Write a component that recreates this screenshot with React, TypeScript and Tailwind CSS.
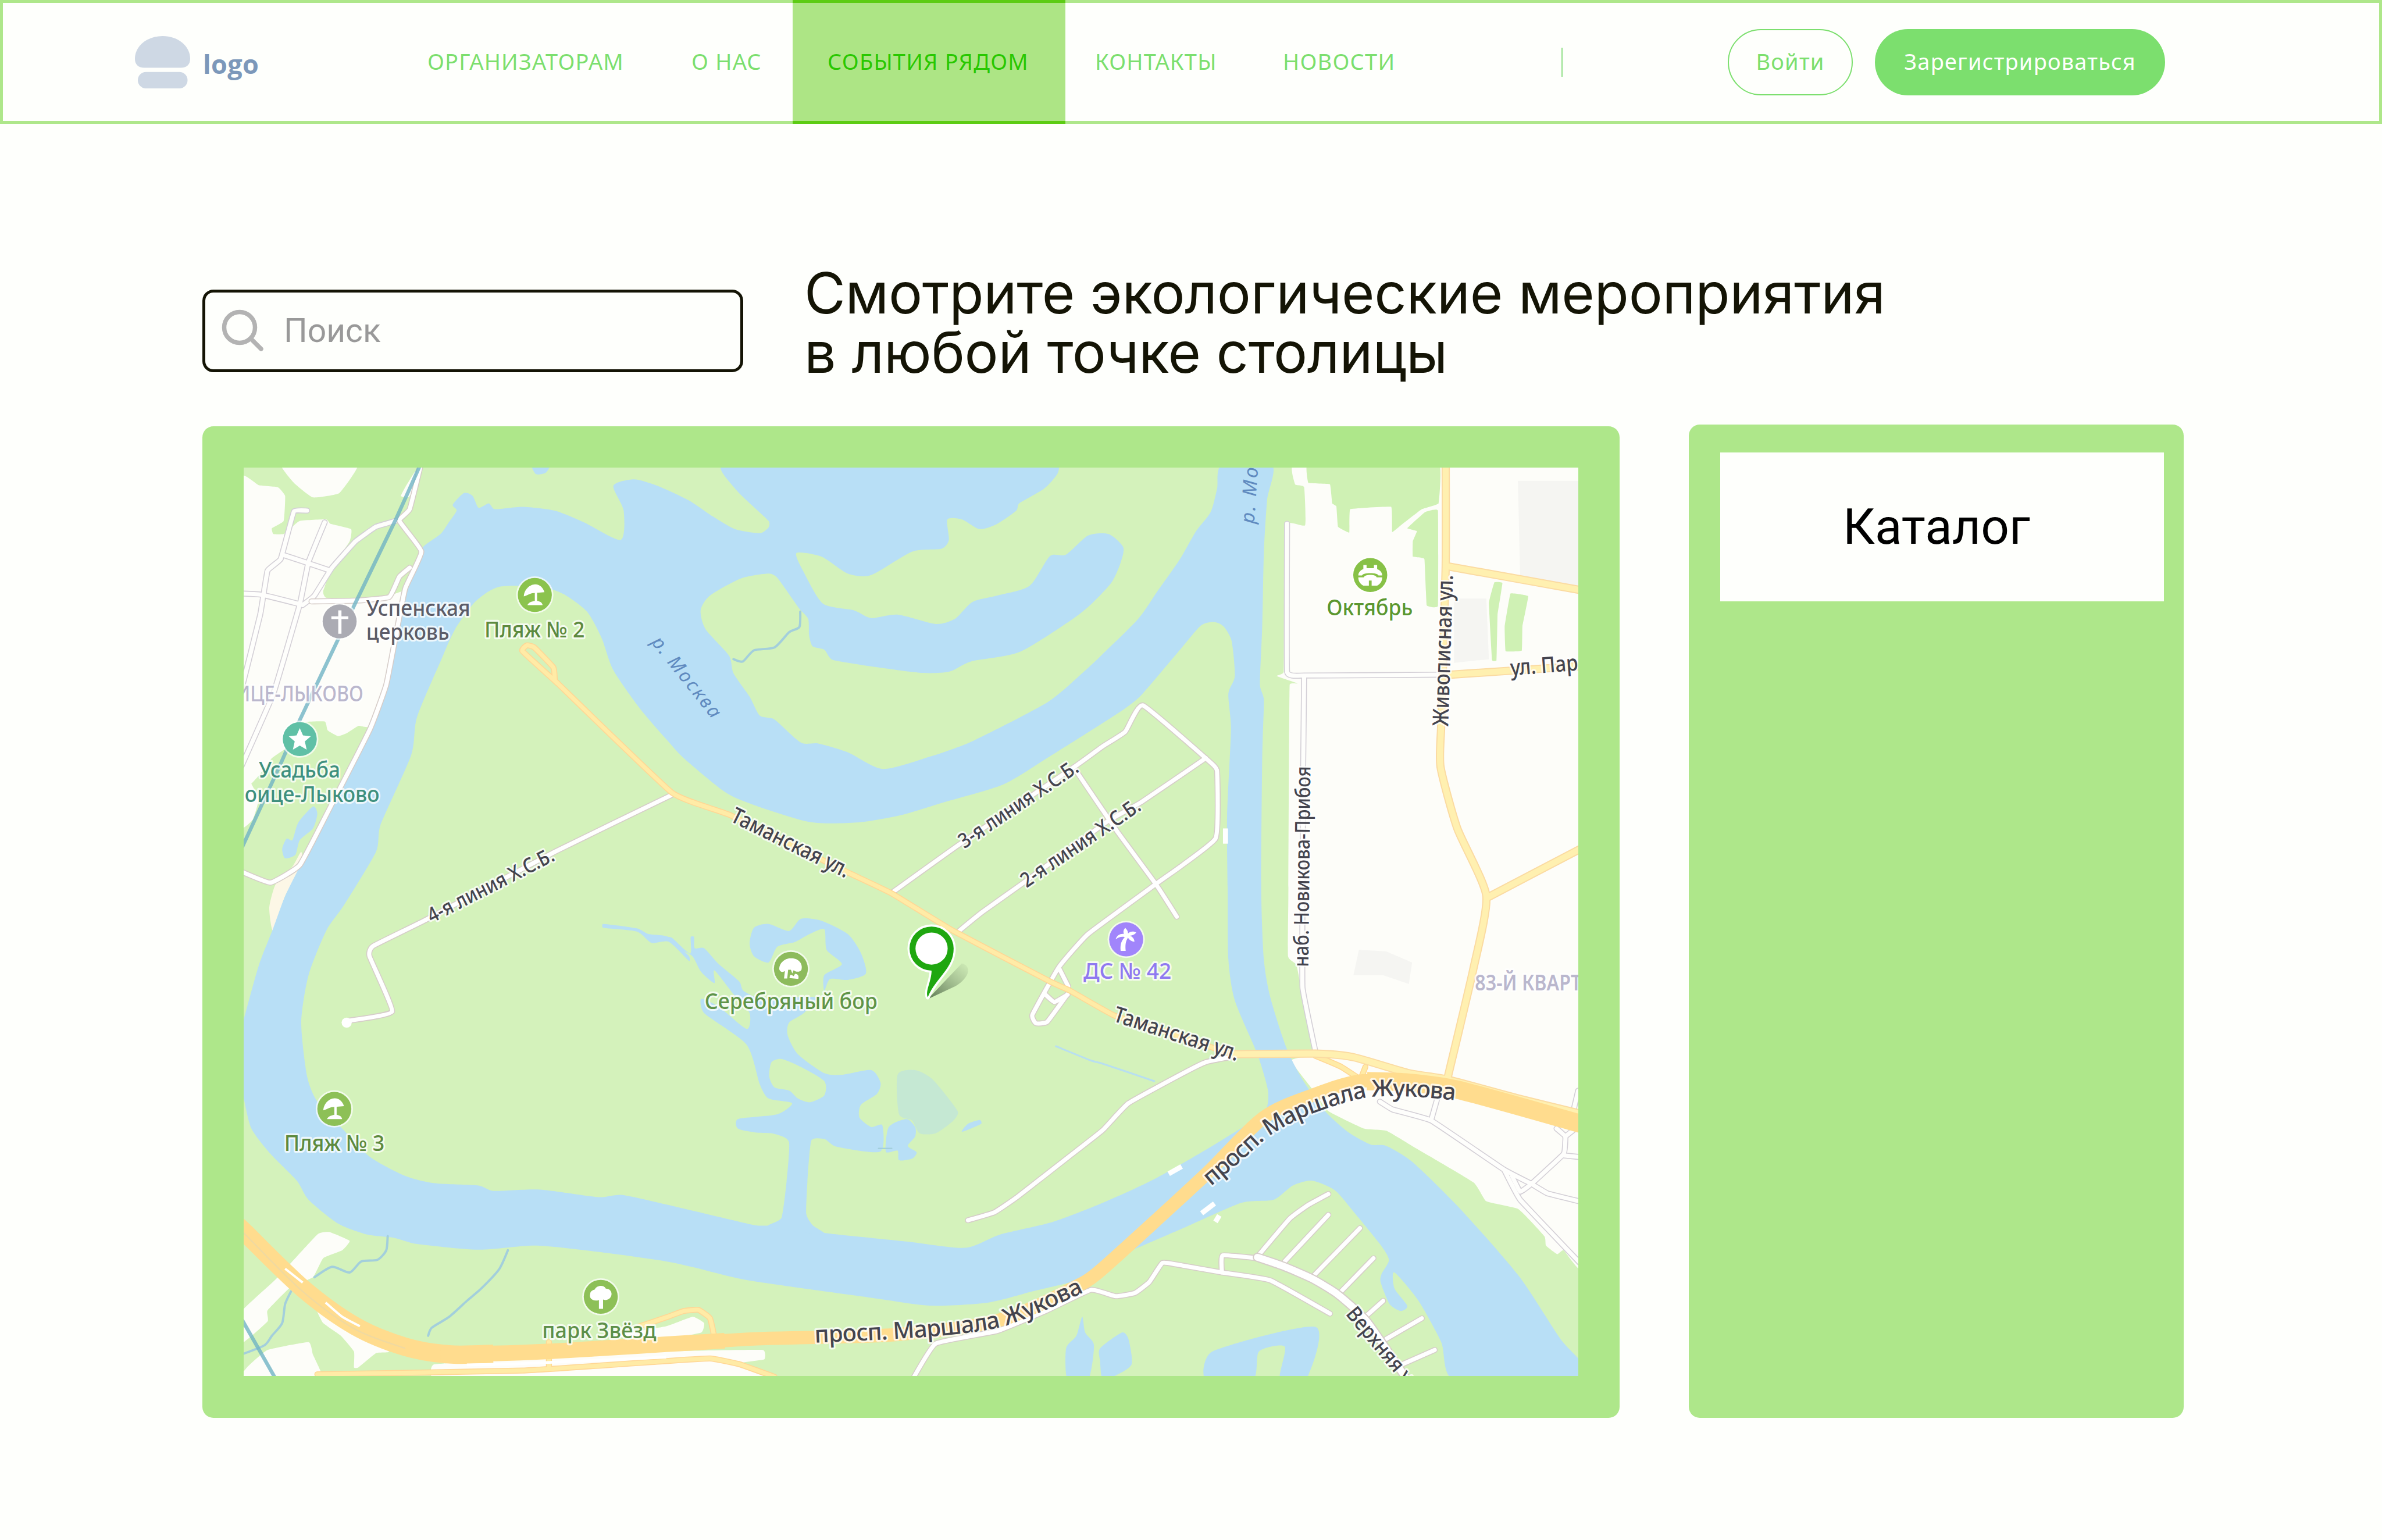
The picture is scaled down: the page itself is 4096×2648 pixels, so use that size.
import React from "react";

/* ---------- map geometry helpers ---------- */

type Tile = "A" | "B" | "C" | "D" | "E" | "F";
type Chunk = [Tile, ...number[]];
type Pt = [number, number];

// Each sheet of the map has its own origin and units per pixel.
const SHEETS: Record<Tile, { x: number; y: number; sx: number; sy: number }> = {
  A: { x: 500, y: 980, sx: 1.568, sy: 1.568 },
  B: { x: 1450, y: 980, sx: 1.568, sy: 1.568 },
  C: { x: 2400, y: 980, sx: 1.4255, sy: 1.568 },
  D: { x: 500, y: 1950, sx: 1.568, sy: 1.452 },
  E: { x: 1450, y: 1950, sx: 1.568, sy: 1.452 },
  F: { x: 2400, y: 1950, sx: 1.4255, sy: 1.452 },
};

const at = (t: Tile, u: number, v: number): Pt => {
  const s = SHEETS[t];
  return [s.x + u / s.sx, s.y + v / s.sy];
};

const points = (chunks: Chunk[]): Pt[] =>
  chunks.flatMap(([t, ...n]) => {
    const out: Pt[] = [];
    for (let i = 0; i < n.length; i += 2) out.push(at(t, n[i], n[i + 1]));
    return out;
  });

const f = (n: number) => n.toFixed(1);

function curve(chunks: Chunk[], closed: boolean, k: number): string {
  const p = points(chunks);
  const n = p.length;
  const get = (i: number) => (closed ? p[(i + n) % n] : p[Math.max(0, Math.min(n - 1, i))]);
  let d = `M${f(p[0][0])} ${f(p[0][1])}`;
  for (let i = 0; i < (closed ? n : n - 1); i++) {
    const a = get(i - 1), b = get(i), c = get(i + 1), e = get(i + 2);
    const len = Math.hypot(c[0] - b[0], c[1] - b[1]);
    const lim = (vx: number, vy: number): Pt => {
      const m = Math.hypot(vx, vy) || 1;
      const q = Math.min(1, (len * 0.33) / m);
      return [vx * q, vy * q];
    };
    const m1 = lim((c[0] - a[0]) * k, (c[1] - a[1]) * k);
    const m2 = lim((e[0] - b[0]) * k, (e[1] - b[1]) * k);
    d += `C${f(b[0] + m1[0])} ${f(b[1] + m1[1])} ${f(c[0] - m2[0])} ${f(c[1] - m2[1])} ${f(c[0])} ${f(c[1])}`;
  }
  return closed ? d + "Z" : d;
}

const Area = ({ c, fill, k = 0.12 }: { c: Chunk[]; fill: string; k?: number }) => (
  <path d={curve(c, true, k)} fill={fill} />
);

const GREEN = "#d4f2bb";
const PARK = "#cff1b4";
const WATER = "#b8dff6";
const LAND = "#fdfdf9";

/* ---------- map data ---------- */

const RIVER: Chunk[] = [
  ["D", 30, 460, 49, 390, 100, 220, 150, 100, 190, 0],
  ["A", 240, 1420, 350, 1200, 390, 1130, 480, 930, 540, 780, 570, 620, 600, 490, 640, 380, 660, 330, 720, 285, 745, 250, 775, 205, 762, 185, 800, 145, 830, 155, 850, 195, 885, 180, 905, 200, 1000, 192, 1110, 205, 1210, 245, 1335, 305, 1345, 205, 1310, 120, 1380, 98, 1460, 120],
  ["B", 78, 170, 160, 225, 235, 268, 320, 282, 350, 262, 350, 240, 240, 135, 195, 50, 1335, 50, 1335, 80, 1290, 130, 1205, 180, 1195, 205, 1130, 250, 1070, 268, 1010, 235, 960, 235, 965, 305, 940, 335, 840, 345, 700, 425, 620, 420, 530, 362, 445, 350, 470, 415, 535, 522, 640, 545, 700, 572, 790, 560, 920, 592, 985, 575, 1045, 517, 1130, 495, 1240, 462, 1310, 360, 1365, 355, 1440, 290, 1510, 285, 1560, 330, 1550, 385, 1520, 450, 1450, 525, 1380, 580, 1205, 688, 1040, 720, 965, 755, 860, 758, 570, 715, 540, 680, 500, 668, 488, 630, 485, 575, 455, 540, 380, 435, 350, 420, 255, 437, 150, 495, 118, 545, 135, 610, 215, 700, 230, 760, 285, 840, 320, 905, 370, 918, 460, 997, 520, 1000, 620, 1030, 740, 1087, 900, 1045, 1050, 990, 1300, 860, 1420, 760],
  ["C", 0, 695, 110, 575, 170, 480, 240, 370, 290, 275, 335, 210, 355, 130, 370, 50, 525, 50, 510, 170, 500, 350, 495, 600, 488, 800, 500, 850, 495, 1050, 492, 1500],
  ["F", 500, 200, 520, 320, 570, 480, 620, 580, 690, 680, 760, 745, 830, 785, 880, 790, 960, 840, 1110, 990, 1290, 1200, 1420, 1400, 1490, 1480, 1490, 1530, 1092, 1530, 1050, 1410, 980, 1280, 905, 1190, 905, 1240, 945, 1295, 925, 1312, 890, 1290, 862, 1220, 865, 1195, 888, 1150, 860, 1100, 780, 1000, 720, 930, 650, 900, 590, 915, 530, 960, 430, 970, 250, 1050, 125, 1105, 0, 1160],
  ["E", 1420, 1210, 1250, 1250, 1100, 1285, 900, 1295, 700, 1270, 280, 1215, 100, 1175],
  ["D", 1490, 1155, 1300, 1130, 1050, 1105, 850, 1118, 640, 1100, 560, 1080, 470, 1070, 370, 1035, 270, 960, 230, 900, 140, 815, 75, 735, 49, 640, 30, 560],
];

const ISLAND: Chunk[] = [
  ["A", 920, 465, 840, 515, 770, 610, 720, 720, 640, 910, 620, 1040, 515, 1280, 500, 1370],
  ["D", 390, 30, 330, 110, 270, 250, 245, 400, 265, 570, 300, 650, 390, 740, 480, 825, 600, 885, 700, 908, 850, 915, 900, 932, 1060, 928, 1260, 952, 1340, 945],
  ["E", 0, 975, 300, 1040, 350, 1042, 395, 1040, 540, 1065, 820, 1092, 1020, 1112, 1140, 1070, 1320, 1030],
  ["F", 0, 970, 160, 895, 340, 790, 480, 700, 510, 665, 512, 610, 480, 500, 410, 330, 390, 200],
  ["C", 388, 1521, 386, 1250, 398, 950, 390, 830, 410, 770, 400, 650, 375, 600, 345, 585, 305, 597, 240, 680, 120, 835, 70, 880],
  ["B", 1490, 930, 1300, 1050, 1150, 1140, 950, 1200, 800, 1245, 650, 1270, 490, 1268, 300, 1210, 200, 1165, 60, 1050],
  ["A", 1490, 985, 1400, 880, 1310, 750, 1270, 640, 1220, 550, 1140, 490, 1060, 465],
];

const PONDS: Chunk[][] = [
  [["A", 1030, 40, 1095, 40, 1080, 75, 1045, 80]],
  [["A", 285, 1215, 300, 1240, 285, 1290, 240, 1330, 225, 1380, 190, 1392, 180, 1360, 195, 1325, 215, 1330, 235, 1270]],
  // ring around the park icon
  [["E", 350, 210, 300, 190, 285, 150, 300, 100, 350, 88, 420, 110, 460, 72, 530, 78, 620, 120, 665, 180, 682, 245, 620, 265, 560, 262, 540, 300, 540, 250, 600, 215, 548, 170, 540, 105, 490, 120, 440, 145, 380, 160]],
  // lake body with its west arm and the channel to the river
  [["E", 510, 320, 470, 370, 420, 400, 415, 440, 450, 500, 540, 560, 600, 565, 700, 550, 732, 590, 720, 625, 665, 660, 660, 700, 700, 730, 738, 725, 730, 808, 580, 792, 540, 768, 495, 775, 478, 1000, 500, 1040, 540, 1070, 350, 1046, 395, 1015, 420, 780, 370, 752, 310, 748, 245, 735, 245, 705, 380, 690, 430, 655, 350, 640, 320, 595, 275, 470, 130, 370, 120, 325, 180, 350, 275, 420, 285, 370, 230, 310, 165, 235, 165, 275, 120, 240, 90, 190, 45, 165, 0, 132, 20, 132, 82, 182, 84, 130, 96, 130, 98, 165, 130, 165, 180, 215, 250, 270, 265, 300, 330, 325]],
  [["E", 760, 730, 820, 705, 850, 730, 850, 760, 825, 790, 855, 810, 840, 830, 795, 835, 790, 805, 750, 808]],
  [["E", 1010, 745, 1030, 720, 1070, 708, 1075, 720]],
  [["E", 1420, 1330, 1430, 1380, 1460, 1420, 1440, 1530, 1370, 1530, 1365, 1430, 1400, 1390]],
  [["F", -8, 1430, 60, 1380, 80, 1400, 90, 1480, 40, 1516, 0, 1530, -8, 1470]],
  [["F", 320, 1530, 340, 1440, 660, 1362, 630, 1530, 550, 1530, 565, 1425, 485, 1440, 465, 1530]],
  [["D", 1275, 88, 1390, 102, 1430, 120, 1500, 130, 1568, 190, 1568, 205, 1500, 145, 1440, 148, 1390, 112, 1275, 100]],
];

const WHITE_LAND: Chunk[][] = [
  [["A", 40, 90, 100, 118, 165, 125, 190, 155, 185, 240, 145, 265, 150, 285, 185, 285, 210, 265, 240, 240, 330, 235, 345, 250, 415, 268, 410, 310, 350, 400, 320, 480, 330, 502, 430, 505, 545, 495, 590, 480, 600, 490, 570, 620, 540, 780, 480, 940, 440, 940, 400, 965, 370, 975, 335, 955, 325, 925, 240, 930, 200, 1010, 145, 1050, 100, 1110, 40, 1155]],
  [["A", 40, 1140, 70, 1130, 100, 1190, 80, 1260, 40, 1290]],
  [["A", 175, 40, 220, 110, 285, 160, 375, 145, 440, 40]],
  [["A", 585, 155, 600, 125, 635, 70, 640, 120, 610, 160]],
  [["C", 597, 40, 597, 115, 625, 125, 628, 255, 565, 255, 562, 755, 540, 770, 605, 795, 580, 800, 576, 1520], ["F", 575, 190, 600, 215, 610, 260, 655, 490, 585, 520, 650, 610, 700, 680, 810, 735, 880, 742, 960, 790, 1150, 905, 1190, 965, 1290, 990, 1370, 1075, 1375, 1105, 1410, 1132, 1430, 1120, 1490, 1180], ["C", 1490, 40]],
  [["D", 40, 1315, 160, 1210, 300, 1070, 340, 1062, 410, 1090, 385, 1120, 320, 1145, 285, 1205, 210, 1235, 130, 1310, 130, 1345, 40, 1415]],
  [["D", 60, 1490, 130, 1435, 270, 1410, 285, 1450, 310, 1500, 310, 1530, 40, 1530]],
  [["D", 300, 1310, 400, 1370, 545, 1440, 500, 1445, 440, 1490, 425, 1490, 425, 1440, 380, 1390, 320, 1350]],
  [["D", 700, 1480, 1490, 1440], ["E", 330, 1435, 335, 1465, 250, 1478, 360, 1530, 0, 1530], ["D", 700, 1530]],
  [["E", 0, 1360, 90, 1330, 130, 1350, 120, 1380, 0, 1400], ["D", 1300, 1392]],
];

const PARKS: Chunk[][] = [
  [["C", 638, 40, 638, 110, 705, 115, 712, 180, 725, 190, 730, 260, 765, 280, 768, 200, 895, 192, 898, 278, 925, 255, 990, 200, 1042, 180, 1042, 40]],
  [["C", 945, 265, 1000, 210, 1040, 205, 1040, 530, 1005, 528, 998, 370, 962, 362, 962, 310, 975, 275]],
  [["C", 1215, 450, 1240, 452, 1225, 560, 1222, 715, 1208, 715, 1198, 520]],
  [["C", 1265, 488, 1320, 497, 1302, 600, 1300, 683, 1250, 685, 1247, 600]],
];

const BLOCKS: Chunk[][] = [
  [["C", 1288, 103, 1490, 103, 1490, 470, 1295, 430]],
  [["C", 1090, 505, 1190, 505, 1198, 712, 1090, 725]],
  [["F", 795, 170, 880, 175, 960, 210, 950, 278, 870, 250, 778, 250]],
];

const STREETS: Chunk[][] = [
  [["A", 265, 205, 220, 208, 175, 370, 130, 410, 105, 560, 40, 820]],
  [["A", 180, 355, 340, 408]],
  [["A", 325, 245, 270, 380, 240, 525, 150, 830, 40, 1080]],
  [["A", 40, 488, 110, 492, 250, 527]],
  [["A", 250, 527, 290, 495, 350, 400, 430, 310, 500, 260, 575, 238]],
  [["C", 572, 250, 572, 755, 625, 768, 1055, 765]],
  [["C", 625, 770, 622, 1080, 620, 1500], ["F", 620, 290, 660, 492]],
  [["F", 860, 650, 900, 675, 1020, 710, 1245, 865, 1330, 910, 1380, 940, 1490, 968]],
  [["F", 1245, 865, 1295, 960, 1490, 1170]],
  [["F", 1020, 705, 1038, 640]],
  [["F", 1270, 885, 1295, 935, 1330, 910, 1430, 815, 1435, 760, 1408, 735]],
  [["F", 1435, 760, 1460, 740]],
  [["F", 1430, 820, 1490, 826]],
  [["F", 1460, 680, 1475, 615]],
];

const LANES: Chunk[][] = [
  [["A", 655, 40, 615, 200, 580, 240, 655, 345, 600, 470, 570, 620, 535, 800, 480, 950, 340, 1225, 240, 1415, 140, 1475, 40, 1437]],
  [["A", 280, 515, 435, 512, 545, 500, 580, 430, 615, 400]],
  [["A", 1510, 1175, 1110, 1370], ["D", 670, 75, 490, 158, 478, 190, 555, 365, 400, 395]],
  [["B", 770, 1510, 1000, 1345, 1400, 1075], ["C", 0, 1010, 70, 960, 125, 870, 340, 1070, 355, 1095, 350, 1325, 165, 1480], ["E", 1440, 120, 1340, 225, 1250, 375, 1262, 402, 1300, 398, 1370, 310]],
  [["E", 1000, 110, 1080, 50], ["B", 1220, 1475, 1500, 1270], ["C", 120, 1200, 320, 1050]],
  [["B", 1400, 1095], ["C", 45, 1300, 165, 1480], ["F", 230, 65]],
  [["E", 1295, 312, 1325, 335, 1370, 312]],
  [["E", 1342, 230, 1372, 285]],
  [["F", 400, 508, 320, 525, 250, 560, 80, 655], ["E", 1490, 740, 1380, 820, 1200, 950, 1120, 1000, 1030, 1025]],
  [["E", 840, 1530, 920, 1415, 1130, 1375, 1300, 1310, 1450, 1245], ["F", 40, 1265, 100, 1255, 145, 1220, 185, 1160, 230, 1165, 370, 1190, 520, 1215, 705, 1320]],
  [["F", 370, 1190, 372, 1136, 480, 1145]],
  [["F", 480, 1140, 580, 1020, 640, 975, 700, 942]],
  [["F", 565, 1155, 700, 1008]],
  [["F", 650, 1205, 798, 1050]],
  [["F", 735, 1255, 840, 1145]],
  [["F", 815, 1330, 870, 1280]],
  [["F", 880, 1400, 990, 1335]],
  [["F", 930, 1480, 1030, 1435]],
];

const AVENUE: Chunk[][] = [[["F", 480, 1142, 560, 1170, 650, 1210, 730, 1260, 820, 1345, 945, 1530]]];

const YELLOW_WIDE: Chunk[][] = [
  [["C", 1064, 40, 1064, 400, 1050, 940, 1048, 1080, 1100, 1290, 1190, 1520], ["F", 1150, 230, 1070, 575]],
  [["C", 1070, 395, 1490, 478]],
  [["C", 1080, 765, 1490, 735]],
  [["C", 1195, 1525, 1490, 1355]],
  [["F", 400, 500, 660, 498, 780, 510, 950, 560, 1070, 580, 1290, 640, 1490, 690]],
];

const YELLOW: Chunk[][] = [
  [["A", 1120, 795, 1000, 685, 1015, 665, 1040, 672, 1105, 740, 1110, 780]],
  [["A", 1110, 785, 1510, 1168], ["B", 220, 1245, 620, 1440, 770, 1512], ["E", 980, 110, 1310, 270, 1380, 300, 1530, 378], ["F", 200, 430, 400, 500]],
  [["F", 660, 505, 740, 540, 800, 580]],
  [["F", 800, 580, 815, 540]],
  [["D", 300, 1512, 1000, 1500, 1490, 1470], ["E", 150, 1462, 250, 1480, 370, 1520]],
  [["D", 1090, 1490, 1090, 1410]],
  [["D", 1400, 1360, 1490, 1332], ["E", 60, 1312, 110, 1308, 150, 1335, 165, 1395]],
];

const STREAMS: Chunk[][] = [
  [["B", 230, 712, 262, 720, 300, 682, 370, 672, 420, 620, 455, 602, 458, 550]],
  [["D", 540, 1075, 535, 1120, 505, 1150, 450, 1155, 410, 1190, 350, 1172, 290, 1205]],
  [["D", 210, 1250, 190, 1290, 180, 1350, 145, 1390, 120, 1420, 40, 1450]],
  [["D", 950, 1120, 920, 1180, 860, 1240, 810, 1280, 750, 1330, 690, 1365, 678, 1390]],
];

/* ---------- map pieces ---------- */

function Roads({ list, casing, fill, w, inner, k = 0.1 }: { list: Chunk[][]; casing: string; fill: string; w: number; inner: number; k?: number }) {
  const ds = list.map((c) => curve(c, false, k));
  return (
    <g fill="none" strokeLinejoin="round" strokeLinecap="round">
      {ds.map((d, i) => <path key={"c" + i} d={d} stroke={casing} strokeWidth={w} />)}
      {ds.map((d, i) => <path key={"f" + i} d={d} stroke={fill} strokeWidth={inner} />)}
    </g>
  );
}

interface LabelProps {
  from: [Tile, number, number];
  to: [Tile, number, number];
  color: string;
  size?: number;
  weight?: number;
  italic?: boolean;
  halo?: string;
  children: string;
}

function Label({ from, to, color, size = 48, weight = 500, italic, halo = "#ffffff", children }: LabelProps) {
  const a = at(...from);
  const b = at(...to);
  const len = Math.hypot(b[0] - a[0], b[1] - a[1]);
  const angle = (Math.atan2(b[1] - a[1], b[0] - a[0]) * 180) / Math.PI;
  return (
    <text
      transform={`translate(${f(a[0])} ${f(a[1])}) rotate(${f(angle)})`}
      textLength={len}
      lengthAdjust={italic ? "spacing" : "spacingAndGlyphs"}
      fontSize={size}
      fontWeight={weight}
      fontStyle={italic ? "italic" : undefined}
      fill={color}
      stroke={halo}
      strokeOpacity={0.75}
      strokeWidth={8}
      strokeLinejoin="round"
      paintOrder="stroke"
    >
      {children}
    </text>
  );
}

function CurvedLabel({ id, c, children }: { id: string; c: Chunk[]; children: string }) {
  const p = points(c);
  let len = 0;
  for (let i = 1; i < p.length; i++) len += Math.hypot(p[i][0] - p[i - 1][0], p[i][1] - p[i - 1][1]);
  return (
    <>
      <path id={id} d={curve(c, false, 0.16)} fill="none" />
      <text fontSize={51} fontWeight={500} fill="#44444e" stroke="#ffffff" strokeOpacity={0.75} strokeWidth={8} strokeLinejoin="round" paintOrder="stroke">
        <textPath href={`#${id}`} textLength={len - 4} lengthAdjust="spacing">{children}</textPath>
      </text>
    </>
  );
}

function Poi({ p, color, children }: { p: [Tile, number, number]; color: string; children: React.ReactNode }) {
  const [x, y] = at(...p);
  return (
    <g transform={`translate(${f(x)} ${f(y)})`}>
      <circle r={40.5} fill="#ffffff" fillOpacity={0.7} />
      <circle r={37} fill={color} />
      <g fill="#ffffff">{children}</g>
    </g>
  );
}

const Umbrella = () => (
  <>
    <path d="M-24 3C-23-14-9-23-1-23c11-1 19 7 22 17L-6-4C-13-2-17 1-24 3Z" />
    <path d="M0-5L5-6 5 13C12 14 16 17 17 22H-16C-14 17-7 14 0 13Z" />
  </>
);

function CityMap() {
  const pin = at("E", 906, 166);
  const tip = at("E", 893, 320);
  return (
    <svg
      viewBox="531 1017 2904 1978"
      preserveAspectRatio="none"
      className="block h-full w-full"
      fontFamily="'Noto Sans', 'Open Sans', sans-serif"
    >
      <defs>
        <linearGradient id="pinShadow" x1="0" y1="1" x2="1" y2="0">
          <stop offset="0" stopColor="#3f5a3a" stopOpacity="0.8" />
          <stop offset="1" stopColor="#6a7f60" stopOpacity="0.05" />
        </linearGradient>
      </defs>

      <rect x="500" y="980" width="3000" height="2050" fill={GREEN} />
      {WHITE_LAND.map((c, i) => <Area key={i} c={c} fill={LAND} k={0.06} />)}
      {BLOCKS.map((c, i) => <Area key={i} c={c} fill="#f5f5f2" k={0} />)}
      {PARKS.map((c, i) => <Area key={i} c={c} fill={PARK} k={0.03} />)}
      <Area c={[["A", 245, 1370, 215, 1420, 165, 1470, 150, 1500], ["D", 136, 40, 150, 110, 190, 0], ["A", 245, 1425]]} fill="#fcf7e6" />

      <Area c={RIVER} fill={WATER} />
      <Area c={ISLAND} fill={GREEN} />
      {PONDS.map((c, i) => <Area key={i} c={c} fill={WATER} />)}
      <Area c={[["E", 360, 525, 395, 515, 460, 540, 540, 585, 540, 630, 490, 652, 450, 640, 420, 615, 370, 605, 352, 570]]} fill={GREEN} />
      <Area c={[["E", 790, 565, 850, 550, 910, 580, 995, 680, 980, 710, 920, 750, 865, 750, 840, 710, 795, 690]]} fill="#c5e8d3" />

      <g fill="none" strokeLinecap="round" strokeLinejoin="round">
        {STREAMS.map((c, i) => <path key={i} d={curve(c, false, 0.12)} stroke="#a3cfdc" strokeWidth={5} />)}
        <path d={curve([["E", 1330, 475, 1450, 520], ["F", 0, 530, 160, 585]], false, 0.1)} stroke="#b8dff0" strokeWidth={4} />
        <path d={curve([["E", 725, 798, 770, 798]], false, 0)} stroke="#a3cfdc" strokeWidth={3} />
      </g>

      <Roads list={STREETS} casing="#d3cfd6" fill="#fefefc" w={13} inner={9} k={0.04} />
      <Roads list={LANES} casing="#d6cdc9" fill="#ffffff" w={13} inner={9} k={0.06} />
      <Roads list={AVENUE} casing="#d6cdc9" fill="#ffffff" w={20} inner={15} />
      <circle cx={at("D", 400, 400)[0]} cy={at("D", 400, 400)[1]} r={11} fill="#ffffff" />

      {/* floating piers */}
      <g stroke="#ffffff" strokeWidth={11} fill="none">
        <path d={curve([["F", 205, 878, 245, 855]], false, 0)} />
        <path d={curve([["F", 307, 1003, 347, 972]], false, 0)} />
        <path d={curve([["F", 350, 1030, 362, 1010]], false, 0)} />
        <path d={curve([["C", 381, 1290, 381, 1342]], false, 0)} />
      </g>

      <Roads list={YELLOW} casing="#ffd795" fill="#ffeba6" w={13} inner={9} k={0.06} />
      <Roads list={YELLOW_WIDE} casing="#fbdba2" fill="#fff0b0" w={18} inner={13} />

      {/* expressway */}
      <g fill="none" stroke="#ffdc8e" strokeLinejoin="round">
        <path d={curve([["D", 20, 1035, 49, 1060, 250, 1240, 430, 1360, 600, 1425, 750, 1449, 900, 1447]], false, 0.16)} strokeWidth={40} />
        <path d={curve([["D", 720, 1448, 900, 1446, 1080, 1440, 1300, 1428], ["E", 0, 1417, 200, 1406]], false, 0.16)} strokeWidth={34} />
        <path d={curve([["D", 1300, 1428], ["E", 0, 1418, 300, 1400, 520, 1395, 800, 1385, 1140, 1340, 1420, 1225], ["F", 0, 1178, 320, 880, 500, 700, 650, 630, 800, 585, 950, 590]], false, 0.16)} strokeWidth={29} />
        <path d={curve([["F", 820, 585, 950, 590, 1100, 612, 1490, 722]], false, 0.16)} strokeWidth={40} />
        <path d={curve([["D", 49, 1065, 250, 1250, 430, 1370, 600, 1430]], false, 0.16)} stroke="#f0d9a0" strokeWidth={3} />
        <path d={curve([["D", 190, 1178, 250, 1222]], false, 0)} stroke="#ffffff" strokeWidth={5} />
        <path d={curve([["D", 328, 1285, 385, 1330, 445, 1360]], false, 0.1)} stroke="#ffffff" strokeWidth={5} />
        <path d={curve([["D", 810, 1482, 1000, 1478, 1490, 1458]], false, 0.1)} stroke="#ffffff" strokeWidth={6} />
      </g>

      {/* metro line */}
      <g fill="none" stroke="#6fb3c4" strokeOpacity={0.8} strokeWidth={8}>
        <path d={curve([["A", 655, 40, 570, 230, 430, 520, 240, 920, 170, 1080, 40, 1362]], false, 0.05)} />
        <path d={curve([["D", 30, 1318, 160, 1530]], false, 0)} />
      </g>

      <Poi p={["A", 376, 583]} color="#ababb3">
        <path d="M-3-24h7v13h15v6H4V27h-7V-5h-15v-6h15Z" />
      </Poi>
      <Poi p={["A", 1042, 493]} color="#8bc34d"><Umbrella /></Poi>
      <Poi p={["D", 358, 673]} color="#8dc057"><Umbrella /></Poi>
      <Poi p={["A", 240, 985]} color="#60c0a6">
        <path d="M0-24L7-8 24-6 11 5 15 23 0 14-15 23-11 5-24-6-7-8Z" />
      </Poi>
      <Poi p={["C", 830, 425]} color="#87c147">
        <path d="M-26 1C-26-8-18-12-15-13v-9h7v7H8v-7h7v9C20-11 26-7 26 1H18C16-6-16-6-18 1Z" />
        <path d="M-14 5C-12-2 12-2 14 5H26C26 14 21 20 15 23H3V12H-3V23H-15C-21 20-26 14-26 5Z" />
      </Poi>
      <Poi p={["E", 426, 230]} color="#8dbb5c">
        <path d="M-25 2C-27-12-12-24 0-23 15-24 27-12 23 2 20 8 10 7 6 3L3 10 0 2H-6L-8 21h-7L-13 5C-18 8-23 7-25 2Z" />
        <path d="M-3 20C-2 9 2 14 6 16l3-5c7 0 9 6 7 11Z" />
      </Poi>
      <Poi p={["D", 1267, 1267]} color="#8dc057">
        <path d="M-4 26V7C-16 11-26 4-23-6c0-7 7-9 10-10C-9-25 6-27 11-18 20-18 25-11 23-3 21 5 12 9 5 6v20Z" />
      </Poi>
      <Poi p={["F", 73, 137]} color="#a185fb">
        <path d="M-12 25C-14 8-8 0-3-5-10-7-18-4-23 0-20-10-12-13-5-12-7-18-5-22-2-25 3-20 4-17 4-13c6-5 12-5 18-2-4 5-9 6-14 7C14-6 18-1 18 5 11 4 7 1 4-4-2 5-2 14-1 25Z" />
      </Poi>

      <Label from={["A", 467, 565]} to={["A", 822, 565]} color="#5c5c68">Успенская</Label>
      <Label from={["A", 467, 645]} to={["A", 750, 645]} color="#5c5c68">церковь</Label>
      <Label from={["A", 870, 638]} to={["A", 1212, 638]} color="#5d8a3e">Пляж № 2</Label>
      <Label from={["A", 22, 857]} to={["A", 457, 857]} color="#bab7cd">ИЦЕ-ЛЫКОВО</Label>
      <Label from={["A", 100, 1117]} to={["A", 378, 1117]} color="#3f907e">Усадьба</Label>
      <Label from={["A", 52, 1199]} to={["A", 512, 1199]} color="#3f907e">оице-Лыково</Label>
      <Label from={["B", -52, 655]} to={["B", 158, 918]} color="#5f8abf" italic halo="#b8dff6" weight={400} size={41}>р. Москва</Label>
      <Label from={["C", 470, 250]} to={["C", 482, 58]} color="#5f8abf" italic halo="#b8dff6" weight={400} size={42}>р. Мо</Label>
      <Label from={["D", 690, 86]} to={["A", 1114, 1398]} color="#44444e" size={45}>4-я линия Х.С.Б.</Label>
      <Label from={["B", 216, 1264]} to={["B", 612, 1460]} color="#44444e">Таманская ул.</Label>
      <Label from={["B", 1018, 1360]} to={["B", 1413, 1094]} color="#44444e" size={45}>3-я линия Х.С.Б.</Label>
      <Label from={["B", 1230, 1494]} to={["C", 123, 1225]} color="#44444e" size={45}>2-я линия Х.С.Б.</Label>
      <Label from={["F", 30, 395]} to={["F", 415, 522]} color="#44444e">Таманская ул.</Label>
      <Label from={["C", 695, 562]} to={["C", 962, 562]} color="#5b972f">Октябрь</Label>
      <Label from={["C", 1072, 942]} to={["C", 1087, 425]} color="#44444e">Живописная ул.</Label>
      <Label from={["F", 638, 224]} to={["C", 645, 1078]} color="#44444e" size={45}>наб. Новикова-Прибоя</Label>
      <Label from={["C", 1266, 768]} to={["C", 1476, 750]} color="#44444e">ул. Пар</Label>
      <Label from={["F", 1155, 298]} to={["F", 1485, 298]} color="#bab7cd" weight={600}>83-Й КВАРТ</Label>
      <Label from={["E", 1424, 261]} to={["F", 213, 261]} color="#8f79f0">ДС № 42</Label>
      <Label from={["E", 132, 357]} to={["E", 721, 357]} color="#5f9448">Серебряный бор</Label>
      <Label from={["D", 187, 805]} to={["D", 529, 805]} color="#5d8a3e">Пляж № 3</Label>
      <Label from={["D", 1067, 1397]} to={["D", 1456, 1397]} color="#5d8f48">парк Звёзд</Label>
      <CurvedLabel id="zhukovaWest" c={[["E", 508, 1412, 740, 1402, 960, 1388, 1135, 1364, 1280, 1315, 1432, 1250]]}>просп. Маршала Жукова</CurvedLabel>
      <CurvedLabel id="zhukovaEast" c={[["F", 336, 918, 430, 837, 520, 757, 640, 692, 810, 639, 950, 634, 1100, 646]]}>просп. Маршала Жукова</CurvedLabel>
      <Label from={["F", 752, 1322]} to={["F", 935, 1545]} color="#44444e" size={46}>Верхняя у</Label>

      {/* location pin */}
      <path
        d={`M${tip[0]} ${tip[1] + 4}L${tip[0] + 74} ${tip[1] - 74}C${tip[0] + 96} ${tip[1] - 68} ${tip[0] + 92} ${tip[1] - 44} ${tip[0] + 60} ${tip[1] - 24}Z`}
        fill="url(#pinShadow)"
      />
      <g stroke="#ffffff" strokeWidth={9} strokeLinejoin="round" paintOrder="stroke" fill="#1fa710">
        <path d={`M${pin[0] - 48} ${pin[1]}a48 48 0 0 1 96 0c0 44-38 62-${(pin[0] + 48 - tip[0]).toFixed(1)} ${(tip[1] - pin[1]).toFixed(1)}C${tip[0] - 6} ${tip[1] - 14} ${tip[0] + 8} ${tip[1] - 34} ${pin[0]} ${pin[1] + 48}A48 48 0 0 1 ${pin[0] - 48} ${pin[1]}Z`} />
      </g>
      <circle cx={pin[0]} cy={pin[1]} r={35} fill="#ffffff" />
    </svg>
  );
}

/* ---------- page ---------- */

function Logo() {
  return (
    <div className="ml-[227px] flex w-[213px] items-start">
      <svg width="95" height="90" viewBox="0 0 95 90" className="mt-[57px] shrink-0" fill="#ced8e4">
        <path d="M0 39C0 17 21 0 47.500 0S95 17 95 39c0 10-6 15.500-16 15.500H16C6 54.500 0 49 0 39Z" />
        <rect x="5" y="61.700" width="85.500" height="28.400" rx="14.200" />
      </svg>
      <span className="ml-[22px] mt-[73px] font-['Open_Sans',sans-serif] text-[45px] leading-[64px] font-bold tracking-[0.3px] text-[#7c98ba]">logo</span>
    </div>
  );
}

function Header() {
  return (
    <header className="box-border flex h-[213px] w-full border-5 border-[#aee78a] font-['Noto_Sans',sans-serif] text-[38px] whitespace-nowrap text-[#7cdf6e]">
      <Logo />
      <nav className="-my-[5px] flex h-[213px] items-center leading-[52px] tracking-[1.2px]">
        <a className="ml-[290px] w-[336px] pb-[4px]">ОРГАНИЗАТОРАМ</a>
        <a className="ml-[118px] w-[118px] pb-[4px]">О НАС</a>
        <a className="ml-[56px] flex h-full w-[469px] items-center border-y-5 border-[#5ccc13] bg-[#ade585] pb-[4px] pl-[60px] text-[#28c800]">СОБЫТИЯ РЯДОМ</a>
        <a className="ml-[51px] w-[206px] pb-[4px]">КОНТАКТЫ</a>
        <a className="ml-[117px] w-[190px] pb-[4px]">НОВОСТИ</a>
        <span className="ml-[289px] h-[50px] w-[2px] bg-[#93e08a]" />
      </nav>
      <div className="mt-[45px] ml-[284px] flex gap-[38px] leading-[52px] tracking-[1.2px]">
        <button className="flex h-[114px] w-[215px] items-center justify-center rounded-full border-2 border-[#7cdf6e] pb-[4px]">Войти</button>
        <button className="flex h-[114px] w-[499px] items-center justify-center rounded-full bg-[#7cdf6e] pb-[4px] text-[#fefffc]">Зарегистрироваться</button>
      </div>
    </header>
  );
}

export default function App() {
  return (
    <div className="h-[2648px] w-[4096px] overflow-hidden bg-[#fefffc]">
      <Header />
      <main className="pl-[348px]">
        <section className="flex h-[517px] items-start">
          <label className="mt-[285px] flex h-[142px] w-[930px] items-center rounded-[19px] border-5 border-[#141405] pl-[28px]">
            <svg width="75" height="74" viewBox="0 0 75 74" fill="none" stroke="#b3b3b3" strokeLinecap="round">
              <circle cx="31" cy="31" r="26.500" strokeWidth="7.500" />
              <path d="M50 50L68 68" strokeWidth="7.500" />
            </svg>
            <span className="ml-[32px] font-['Roboto',sans-serif] text-[57px] leading-[68px] text-[#999999]">Поиск</span>
          </label>
          <h1 className="mt-[240px] ml-[105px] font-['Inter',sans-serif] text-[97px] leading-[102px] font-[370] tracking-[-0.3px] whitespace-nowrap text-[#141405]">
            Смотрите экологические мероприятия
            <br />
            в любой точке столицы
          </h1>
        </section>
        <section className="flex items-start">
          <div className="mt-[3px] h-[1705px] w-[2437px] rounded-[19px] bg-[#aee78a] px-[71px] pt-[71px]">
            <div className="h-[1562px] w-[2295px] overflow-hidden">
              <CityMap />
            </div>
          </div>
          <aside className="ml-[119px] h-[1708px] w-[851px] rounded-[19px] bg-[#aee78a] pt-[48px] pl-[54px]">
            <div className="flex h-[256px] w-[763px] items-center bg-[#fefffc] pl-[211px] font-['Roboto',sans-serif] text-[85.5px] leading-[100px] text-black">
              Каталог
            </div>
          </aside>
        </section>
      </main>
    </div>
  );
}
